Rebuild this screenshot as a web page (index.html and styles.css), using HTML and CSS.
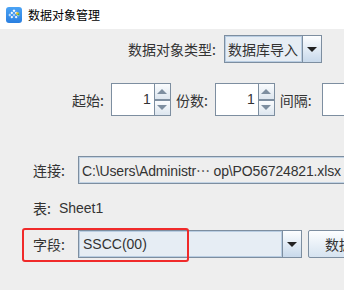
FILE: index.html
```html
<!DOCTYPE html>
<html lang="zh">
<head>
<meta charset="utf-8">
<link rel="stylesheet" href="styles.css">
</head>
<body>
<div class="titlebar">
  <svg class="logo" width="16" height="16" viewBox="0 0 16 16">
    <defs>
      <linearGradient id="lg" x1="0" y1="0" x2="0" y2="1">
        <stop offset="0" stop-color="#4aa3f5"/>
        <stop offset="1" stop-color="#2a7fe0"/>
      </linearGradient>
    </defs>
    <rect x="0" y="0" width="16" height="16" rx="3" fill="url(#lg)"/>
    <g fill="#fff" transform="rotate(45 8 8)">
      <rect x="4" y="4" width="2" height="2"/>
      <rect x="7" y="4" width="2" height="2"/>
      <rect x="4" y="7" width="2" height="2"/>
      <rect x="7" y="7" width="2" height="2" opacity=".6"/>
      <rect x="10" y="7" width="2" height="2"/>
      <rect x="7" y="10" width="2" height="2"/>
      <rect x="4" y="10" width="2" height="2" opacity=".7"/>
      <rect x="10" y="4" width="2" height="2" opacity=".7"/>
    </g>
    <circle cx="11.5" cy="6.5" r="1.6" fill="#e9c23a"/>
    <circle cx="12.5" cy="7.5" r="0.9" fill="#3cb043"/>
  </svg>
  <span class="title">数据对象管理</span>
</div>

<div class="panel">
  <div class="row row-type">
    <span class="lbl">数据对象类型:</span>
    <div class="combo combo-type">
      <span class="combo-text">数据库导入</span>
      <span class="combo-btn"><i class="arrow"></i></span>
    </div>
  </div>

  <div class="row row-spin">
    <span class="lbl">起始:</span>
    <div class="spinner">
      <span class="spin-val">1</span>
      <span class="spin-btns"><span class="sb"><i class="up"></i></span><span class="sb"><i class="down"></i></span></span>
    </div>
    <span class="lbl">份数:</span>
    <div class="spinner">
      <span class="spin-val">1</span>
      <span class="spin-btns"><span class="sb"><i class="up"></i></span><span class="sb"><i class="down"></i></span></span>
    </div>
    <span class="lbl">间隔:</span>
    <div class="spinner spinner-cut"></div>
  </div>

  <div class="row row-conn">
    <span class="lbl lbl-w">连接:</span>
    <div class="field">C:\Users\Administr<span class="ell">…</span> op\PO56724821.xlsx</div>
  </div>

  <div class="row row-sheet">
    <span class="lbl">表:</span>
    <span class="sheet">Sheet1</span>
  </div>

  <div class="row row-field">
    <span class="lbl lbl-w">字段:</span>
    <div class="combo combo-field">
      <span class="combo-text latin">SSCC(00)</span>
      <span class="combo-btn"><i class="arrow"></i></span>
    </div>
    <div class="btn">数据库</div>
    <div class="mark"></div>
  </div>
</div>
</body>
</html>
```

FILE: styles.css
```css
*{margin:0;padding:0;box-sizing:border-box;}
html,body{height:100%;}
body{background:#eeeeee;overflow:hidden;font-family:"Noto Sans CJK SC","Liberation Sans",sans-serif;color:#333;}

.titlebar{height:29px;background:#fff;display:flex;align-items:center;padding-left:6px;gap:6px;}
.logo{display:block;}
.title{font-size:12px;color:#000;}

.panel{width:344px;}
.row{display:flex;align-items:center;white-space:nowrap;}
.row > *{flex-shrink:0;}
.lbl{font-size:14px;line-height:20px;color:#333;}

.row-type{margin-top:6px;padding-left:128px;height:28px;}
.row-type .lbl{margin-right:8px;}

.combo{display:flex;height:28px;border:1px solid #7d8ea0;}
.combo-text{flex:1;border:1px solid #b9cde2;background:#e6edf4;font-size:14px;line-height:24px;padding-left:2px;color:#333;}
.combo-text.latin{font-family:"Liberation Sans","Noto Sans CJK SC",sans-serif;padding-left:3px;}
.combo-btn{width:19px;border-left:1px solid #7d8ea0;background:linear-gradient(#fdfeff,#c8d9eb);display:flex;align-items:center;justify-content:center;}
.arrow{width:0;height:0;border-left:5px solid transparent;border-right:5px solid transparent;border-top:5px solid #222;}
.combo-type{width:98px;}
.combo-field{width:224px;}

.row-spin{margin-top:20px;padding-left:72px;height:33px;}
.row-spin .lbl{margin-right:7px;}
.spinner{display:flex;height:33px;width:60px;border:1px solid #7d8ea0;background:#fff;margin-right:5px;}
.spin-val{flex:1;text-align:right;padding-right:3px;font-size:14px;line-height:30px;font-family:"Liberation Sans",sans-serif;color:#333;}
.spin-btns{width:16px;display:flex;flex-direction:column;border-left:1px solid #7d8ea0;}
.sb{flex:1;display:flex;align-items:center;justify-content:center;background:linear-gradient(#fafcfe,#dde6ef);}
.sb + .sb{border-top:2px solid #7d8ea0;}
.up{width:0;height:0;border-left:5px solid transparent;border-right:5px solid transparent;border-bottom:5px solid #7d8ea0;}
.down{width:0;height:0;border-left:5px solid transparent;border-right:5px solid transparent;border-top:5px solid #7d8ea0;}
.spinner-cut{width:40px;margin-left:3px;}

.row-conn{margin-top:40px;padding-left:33px;height:28px;}
.lbl-w{width:45px;}
.field{height:28px;width:300px;border:1px solid #7d8ea0;box-shadow:inset 0 0 0 1px #c2d3e4;background:#eeeeee;font-family:"Liberation Sans","Noto Sans CJK SC",sans-serif;font-size:14px;letter-spacing:-0.15px;line-height:26px;padding-left:3px;color:#333;}
.ell{font-family:"Noto Sans CJK SC",sans-serif;}

.row-sheet{margin-top:14px;padding-left:33px;height:20px;}
.sheet{margin-left:8px;font-family:"Liberation Sans",sans-serif;font-size:14px;}

.row-field{margin-top:12px;padding-left:33px;height:28px;position:relative;}
.btn{margin-left:6px;height:28px;width:80px;border:1px solid #7d8ea0;border-radius:2px;background:linear-gradient(#fdfeff,#d6e3f0);font-size:14px;line-height:26px;padding-left:16px;color:#333;}
.mark{position:absolute;left:22px;top:-2px;width:167px;height:34px;border:2px solid #f02a2a;border-radius:3px;}
```
